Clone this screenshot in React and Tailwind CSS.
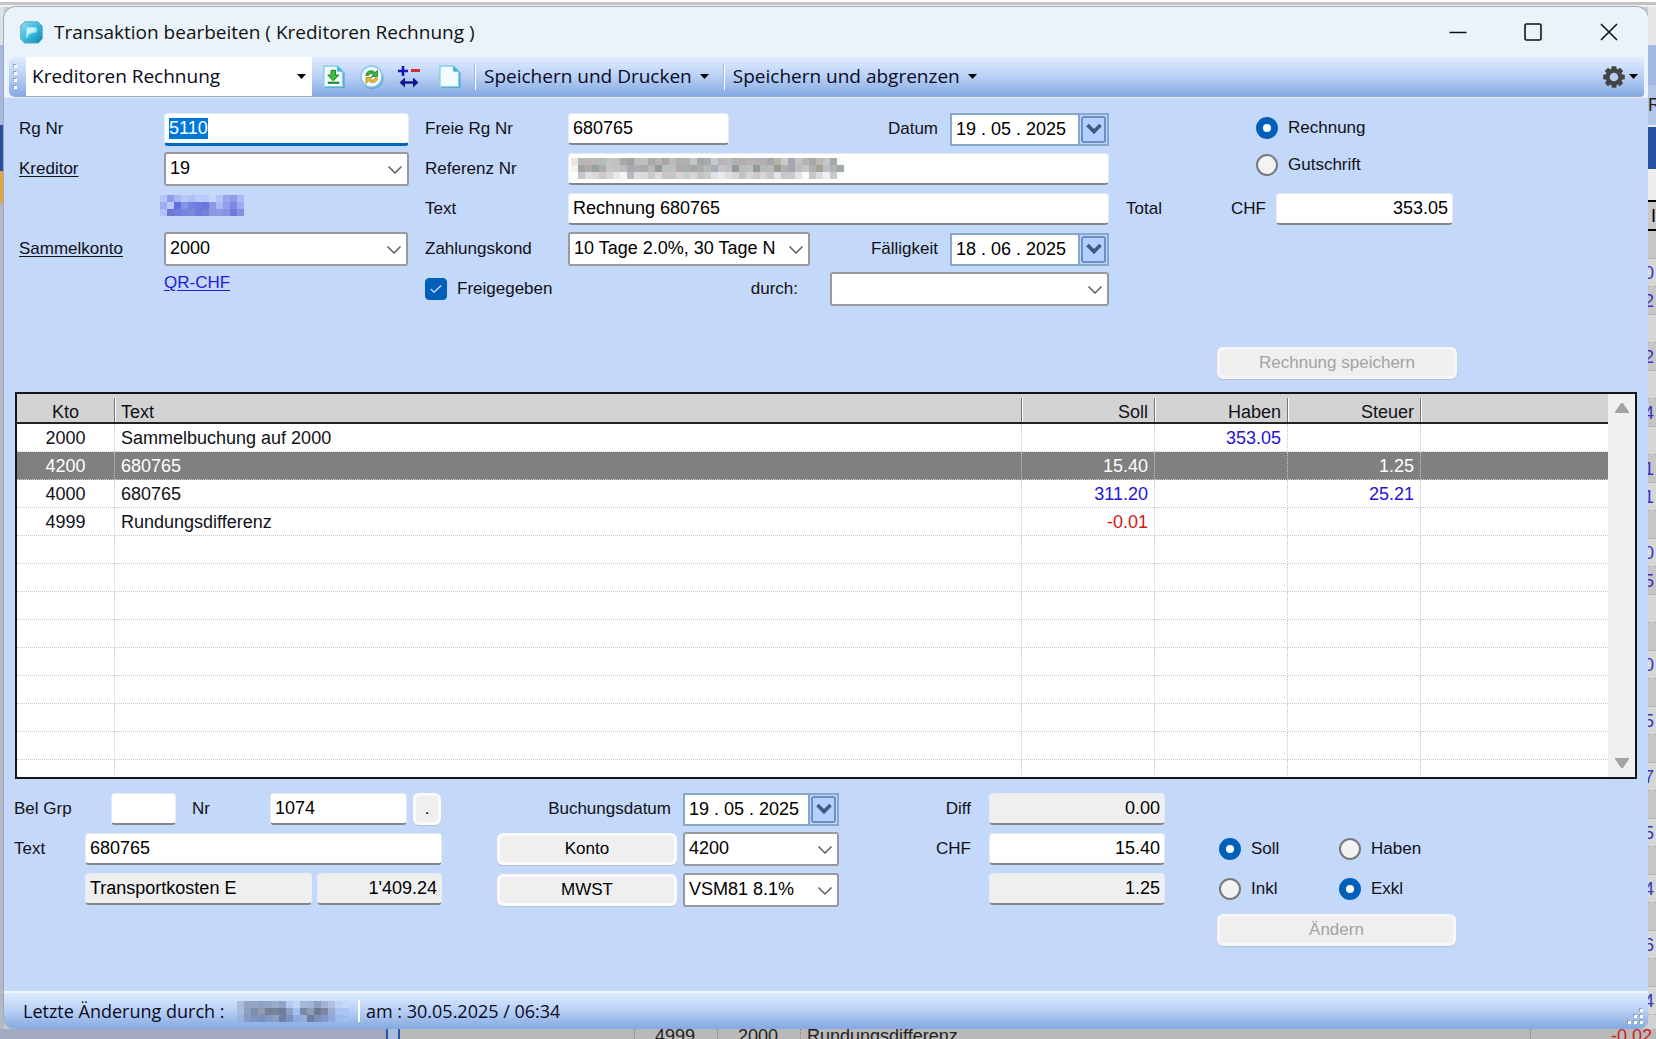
import { useEffect, useId, useRef } from "react";

const FIELD =
  "h-8 min-w-0 rounded-sm border border-[#e6ebf5] border-b-2 border-b-[#868686] px-1 text-lg text-black outline-none";

const REFERENCE_CELLS = [
  "#e8e4e2 #b4b8b8 #c0b2b8 #bcb6bc #b2bcba #c2c4c2 #bfc1bf #a8a8ae #a2a2a4 #bcbcba #bec0be #aaa9ac #b6b2b8 #a5a6a6 #bbb9b9 #b3afb0 #b2b0b2 #c3c7cb #a7a7a7 #a9abab #c6cbd0 #b7b3b9 #bcb9bd #b1b1b3 #b0aeb0 #b4b2b4 #b3afb5 #b0aeb2 #a8a4ac #b9b4a8 #c9cac9 #a7a4ae #bfc1c2 #b6b2b8 #aaa6a8 #bdb5b6 #c0c7c7 #a4a8a8 #fafafa",
  "#f6f2ee #9fa4a2 #abaca4 #98a29f #acb0a8 #c3c5c3 #c0c4c2 #bdbdc0 #a5abae #adb0b0 #abaaae #b7b7b7 #929a96 #bbbfbd #bcc0be #b1a8a8 #a5b0b6 #a6a8a4 #abafad #b5b9b7 #a5b1b1 #c8c0cc #bdbfc1 #929a94 #b9bdbb #bbbfbd #949b95 #b5b7b8 #b9b9bb #9a9a8e #adb0ad #a0a8b4 #bdbdbf #c1c5c3 #adb0ac #a4a294 #bfbdbf #acb4b8 #a0a8a6 #e2e7ea",
  "#fdfdfd #c3c7c7 #dfdde1 #dbd5d9 #c9cbc8 #d9d3d6 #e7e7eb #f4f4f4 #bbb9b9 #dedce0 #dcd6da #c6cac8 #d9dbd8 #c8c2cc #c8c6c9 #dcd2cf #c8ccca #d6d6d8 #c6c2ca #c6cac9 #dbe3ea #ebebeb #dddde0 #d8d4da #c4c4c8 #d2d5d2 #c8c9c7 #d9d3d9 #c8c6ca #e5e3e4 #c9c5cb #c7cbc9 #e5e3e7 #f9fafc #c9c5c9 #dbdbe1 #eef1f4 #c9cbcb #f9fbfc",
];

const CREDITOR_CELLS = [
  "#b3c4f7 #929aec #a5b9f4 #b7c8f8 #acc0f6 #b8cdfa #b8ccfa #c3d6fb #b4c6f8 #9ba8f0 #929aec #a7bcf5",
  "#9faaf0 #bccaf9 #6070de #8793e6 #7780e3 #7079e6 #6878e3 #8c99e8 #abbcf2 #969fee #7f86ec #9bacf0 #8898ee",
  "#b0c2f5 #6a76d8 #727fdc #7785df #7988dc #6c7cdc #7482d8 #8a98e6 #8b98e4 #8794e4 #7379dc #8292e2",
];

const USER_CELLS = [
  "#a9bcd9 #98a4bb #93a6c6 #8fa2c2 #93a5c5 #9cadcb #8ea3cb #b3c9f2 #c3d6fa #a6b8d8 #a2b3d3 #8c9fc4 #a3b4d2 #aebfe2 #bfd3f7 #c3d8fb",
  "#a5bbe0 #8e9fbd #7c8cab #9099ae #748199 #75829b #6f7f9b #8da2c8 #a7c1ef #7989a8 #929cb4 #6c7a94 #7c86a0 #9badcf #a9c3f0 #aac5f2",
  "#9ab2de #859bc6 #7f94bd #7990bd #8198c4 #8aa0cb #6d80a6 #7b92c0 #8faadb #93aedd #6f7da0 #7f90b4 #8199c8 #8da9da #9dbaec #a0bdef",
];

const ROWS = [
  { kto: "2000", text: "Sammelbuchung auf 2000", haben: "353.05" },
  { kto: "4200", text: "680765", soll: "15.40", steuer: "1.25", active: true },
  { kto: "4000", text: "680765", soll: "311.20", steuer: "25.21" },
  { kto: "4999", text: "Rundungsdifferenz", soll: "-0.01" },
  {}, {}, {}, {}, {}, {}, {}, {},
];

function Pixelated({ rows, label }) {
  return (
    <div role="img" aria-label={label} className="flex flex-col">
      {rows.map((row, r) => (
        <div key={r} className="flex">
          {row.split(" ").slice(0, rows[0].split(" ").length).map((color, c) => (
            <span key={c} className="size-[7px]" style={{ backgroundColor: color }} />
          ))}
        </div>
      ))}
    </div>
  );
}

function Combo({ label, value, className }) {
  return (
    <div className={"relative " + className}>
      <select
        aria-label={label}
        defaultValue={value}
        className="block h-[34px] w-full appearance-none rounded-[3px] border-2 border-[#9a9a9e] bg-white pr-6 pb-0.5 pl-1 text-lg text-black outline-none"
      >
        <option>{value}</option>
      </select>
      <svg className="pointer-events-none absolute top-3.5 right-1.5 h-2 w-4" viewBox="0 0 16 8" fill="none" stroke="#606060" strokeWidth="1.5">
        <path d="M1.5 .5 8 7 14.5 .5" />
      </svg>
    </div>
  );
}

function DateField({ label, value, className }) {
  return (
    <div className={"flex h-[33px] border-2 border-[#86a6cb] bg-white " + className}>
      <input aria-label={label} defaultValue={value} className="w-0 flex-1 pl-1 text-lg text-black outline-none" />
      <button type="button" aria-label={label + " wählen"} className="flex w-[29px] items-center justify-center border-l-2 border-[#86a6cb] bg-[#c0d6f8] p-px">
        <span className="flex h-full w-full items-center justify-center rounded-[3px] border-2 border-[#6d8fc4] bg-[#b3d0ff]">
          <svg className="h-3 w-4" viewBox="0 0 16 12" fill="none" stroke="#45597f" strokeWidth="3.6">
            <path d="M1.5 2 8 8.6 14.5 2" />
          </svg>
        </span>
      </button>
    </div>
  );
}

function Radio({ name, label, checked, className = "" }) {
  return (
    <label className={"flex items-center gap-2.5 text-[17px] " + className}>
      <input
        type="radio"
        name={name}
        defaultChecked={checked}
        className="size-[22px] shrink-0 appearance-none rounded-full border-2 border-[#77797d] bg-[#f3f3f3] checked:border-[7px] checked:border-[#005fb8] checked:bg-white"
      />
      {label}
    </label>
  );
}

function PushButton({ children, className = "", disabled }) {
  return (
    <button
      type="button"
      disabled={disabled}
      className={"h-8 rounded-md border-[3px] border-[#fbfbfb] bg-[#efefef] text-[17px] leading-6 text-black shadow-[0_1px_1px_#b9c2d4] disabled:border-[#f6f6f6] disabled:text-[#a3a3a3] " + className}
    >
      {children}
    </button>
  );
}

function Caret() {
  return (
    <svg className="h-[5px] w-[9px]" viewBox="0 0 9 5">
      <path d="M0 0h9L4.5 5z" fill="#000" />
    </svg>
  );
}

function Separator() {
  return <span className="h-[26px] w-0.5 border-l border-[#9db8e4] bg-white" />;
}

function AppIcon() {
  return (
    <svg className="size-[23px]" viewBox="0 0 23 23">
      <defs>
        <linearGradient id="tile" x1="0" y1="0" x2="1" y2="1">
          <stop offset="0" stopColor="#8fe0ee" />
          <stop offset=".5" stopColor="#3fb9da" />
          <stop offset="1" stopColor="#0a84ae" />
        </linearGradient>
      </defs>
      <path d="M5 .8h13l4.2 4.5v12.5L18.500 22H4.500L.8 18V4.500z" fill="url(#tile)" stroke="#4aa9c4" strokeLinejoin="round" />
      <path d="M6 6h9c3 0 3 5 0 6l-5 1-3 4H6z" fill="#8ee3f4" />
      <path d="M7 7h7c1.500 0 1.500 3 0 3.500L8.500 12 7 14z" fill="#c9f6fb" />
    </svg>
  );
}

function SheetBase() {
  return (
    <>
      <path d="M3 2.500h14l6 6V24H3z" fill="#4f9fc8" />
      <path d="M1.500 1h14l5.500 5.500V22.500h-19.500z" fill="#f3fcff" stroke="#86cfe6" strokeWidth="1.500" />
      <path d="M15.500 1v5.500H21z" fill="#38b6dc" stroke="#5cc0de" />
    </>
  );
}

function ImportIcon() {
  return (
    <svg className="size-6" viewBox="0 0 24 25">
      <SheetBase />
      <path d="M9 5.500h4.500v5H17L11.200 16.500 5.500 10.500H9z" fill="#3fc23a" stroke="#17801c" />
      <path d="M5.500 18.500h12" stroke="#17801c" strokeWidth="2.200" />
    </svg>
  );
}

function RefreshIcon() {
  return (
    <svg className="size-6" viewBox="0 0 24 24">
      <circle cx="12.500" cy="13" r="11" fill="#5fa3cd" />
      <circle cx="11.500" cy="11.500" r="10.500" fill="#eefaff" stroke="#86c9e4" strokeWidth="1.500" />
      <path d="M6 10.500C6 6 12 4 15 7.500L17.500 5.500v6h-6l2-2C11.500 8 9 8.500 8.500 10.500z" fill="#3fae3c" stroke="#1d7d28" strokeWidth=".8" />
      <path d="M17.500 13c0 4.500-6 6-9 2.800L6 18.500v-6h6L10 14.500c1.800 1.300 4.500.8 5-1.500z" fill="#f2bd24" stroke="#a8862a" strokeWidth=".8" />
    </svg>
  );
}

function AdjustIcon() {
  return (
    <svg className="h-[22px] w-[22px]" viewBox="0 0 22 22" fill="none">
      <path d="M0 5h10M5 0v10" stroke="#1b12c4" strokeWidth="2.600" />
      <path d="M13 4.500h9" stroke="#d03030" strokeWidth="3" />
      <path d="M4 16.500h14" stroke="#16168c" strokeWidth="2.600" />
      <path d="M7 11.500v10l-5.500-5zM15 11.500v10l5.500-5z" fill="#16168c" />
    </svg>
  );
}

function NewIcon() {
  return (
    <svg className="size-6" viewBox="0 0 24 25">
      <SheetBase />
    </svg>
  );
}

function GearIcon() {
  return (
    <svg className="size-[22px]" viewBox="-11 -11 22 22">
      {[0, 45, 90, 135].map((a) => (
        <rect key={a} x="-2.500" y="-10.800" width="5" height="21.600" rx="1" fill="#444" transform={"rotate(" + a + ")"} />
      ))}
      <circle r="8.500" fill="#444" />
      <circle r="4.300" fill="#b5cbf1" />
    </svg>
  );
}

function TitleBar() {
  return (
    <header className="flex h-[50px] shrink-0 items-center bg-[#ebf3fa] pl-4 font-['Open_Sans',sans-serif] text-[19px] text-[#111]">
      <AppIcon />
      <h1 className="flex-1 pl-[11px]">Transaktion bearbeiten ( Kreditoren Rechnung )</h1>
      <button type="button" aria-label="Minimieren" className="flex h-full w-[75px] items-center justify-center">
        <svg className="size-[18px]" viewBox="0 0 18 18"><path d="M.5 9.500h17" stroke="#111" strokeWidth="1.500" /></svg>
      </button>
      <button type="button" aria-label="Maximieren" className="flex h-full w-[75px] items-center justify-center">
        <svg className="size-[18px]" viewBox="0 0 18 18"><rect x="1" y="1" width="16" height="16" rx="1.500" fill="none" stroke="#111" strokeWidth="1.600" /></svg>
      </button>
      <button type="button" aria-label="Schliessen" className="flex h-full w-[78px] items-center justify-center">
        <svg className="size-[18px]" viewBox="0 0 18 18"><path d="M1 1 17 17M17 1 1 17" stroke="#111" strokeWidth="1.600" /></svg>
      </button>
    </header>
  );
}

function Toolbar() {
  return (
    <div className="bg-[#ebf3fa]">
      <div className="mr-1 ml-[5px] flex h-10 items-center rounded-l-md rounded-r-sm border-b border-[#a3a9bf] bg-linear-to-b from-[#e0edfe] via-[#b9d0f5] to-[#85aae3] font-['Open_Sans',sans-serif] text-[19px] text-[#0a0a1e]">
        <span className="mx-[5px] flex flex-col gap-1">
          {[0, 1, 2, 3].map((i) => (
            <span key={i} className="size-[3px] bg-white shadow-[-1px_-1px_0_#8f9fc0]" />
          ))}
        </span>
        <div className="relative ml-1 h-[39px] w-[286px] bg-white">
          <select aria-label="Vorlage" defaultValue="Kreditoren Rechnung" className="h-full w-full appearance-none bg-white pl-1.5 outline-none">
            <option>Kreditoren Rechnung</option>
          </select>
          <span className="pointer-events-none absolute top-[17px] right-1.5 flex"><Caret /></span>
        </div>
        <button type="button" aria-label="Importieren" className="ml-2.5"><ImportIcon /></button>
        <button type="button" aria-label="Aktualisieren" className="ml-3.5"><RefreshIcon /></button>
        <button type="button" aria-label="Anpassen" className="ml-3.5"><AdjustIcon /></button>
        <button type="button" aria-label="Neu" className="mr-3 ml-[18px]"><NewIcon /></button>
        <Separator />
        <button type="button" className="flex items-center gap-2 pr-3.5 pl-2">Speichern und Drucken <Caret /></button>
        <Separator />
        <button type="button" className="flex items-center gap-2 pl-2">Speichern und abgrenzen <Caret /></button>
        <button type="button" aria-label="Einstellungen" className="mr-1.5 ml-auto flex items-center gap-1"><GearIcon /> <Caret /></button>
      </div>
    </div>
  );
}

function InvoiceForm() {
  const id = useId();
  const first = useRef(null);
  useEffect(() => {
    first.current.focus();
    first.current.select();
  }, []);
  return (
    <form className="flex px-[15px] pt-[11px] text-[17px]">
      <div className="grid grid-cols-[145px_245px] auto-rows-[40px] items-center">
        <label htmlFor={id + "rg"}>Rg Nr</label>
        <input
          ref={first}
          id={id + "rg"}
          defaultValue="5110"
          className="h-[33px] rounded-sm border border-[#e6ebf5] border-b-[3px] border-b-[#0067c0] bg-white px-1 text-lg leading-normal outline-none selection:bg-[#0078d7] selection:text-white"
        />
        <a href="#kreditor" className="underline underline-offset-2">Kreditor</a>
        <Combo label="Kreditor" value="19" className="w-[245px]" />
        <span />
        <div className="-ml-1 pb-2"><Pixelated rows={CREDITOR_CELLS} label="Kreditor unkenntlich" /></div>
        <a href="#sammelkonto" className="underline underline-offset-2">Sammelkonto</a>
        <Combo label="Sammelkonto" value="2000" className="w-[244px]" />
        <span />
        <a href="#qr" className="pb-3 text-[#2020d8] underline underline-offset-2">QR-CHF</a>
      </div>
      <div className="ml-4 grid grid-cols-[143px_541px] auto-rows-[40px] items-center">
        <label htmlFor={id + "frei"}>Freie Rg Nr</label>
        <div className="flex items-center">
          <input id={id + "frei"} defaultValue="680765" className={FIELD + " w-[161px] bg-white"} />
          <span className="ml-auto pr-3">Datum</span>
          <DateField label="Datum" value="19 . 05 . 2025" className="w-[159px]" />
        </div>
        <span>Referenz Nr</span>
        <div className="flex h-8 items-center rounded-sm border border-[#e6ebf5] border-b-2 border-b-[#868686] bg-white px-0.5">
          <Pixelated rows={REFERENCE_CELLS} label="Referenznummer unkenntlich" />
        </div>
        <label htmlFor={id + "text"}>Text</label>
        <input id={id + "text"} defaultValue="Rechnung 680765" className={FIELD + " bg-white"} />
        <span>Zahlungskond</span>
        <div className="flex items-center">
          <Combo label="Zahlungskond" value="10 Tage 2.0%, 30 Tage N" className="w-[242px]" />
          <span className="ml-auto pr-3">Fälligkeit</span>
          <DateField label="Fälligkeit" value="18 . 06 . 2025" className="w-[159px]" />
        </div>
        <label className="flex items-center gap-2.5">
          <span className="relative flex">
            <input type="checkbox" defaultChecked className="size-[22px] appearance-none rounded-[4px] border border-[#77797d] bg-white checked:border-[#005fb8] checked:bg-[#005fb8]" />
            <svg className="pointer-events-none absolute top-[7px] left-[5px] h-2 w-3" viewBox="0 0 12 8" fill="none" stroke="#cfe3f7" strokeWidth="1.300"><path d="M.8 4 4 7.200 11.200 .6" /></svg>
          </span>
          Freigegeben
        </label>
        <div className="flex items-center justify-end">
          <span className="pr-8">durch:</span>
          <Combo label="durch" value="" className="w-[279px]" />
        </div>
      </div>
      <div className="ml-[17px] flex w-[331px] flex-col pb-[13px]">
        <div className="flex h-20 flex-col pl-[130px]">
          <Radio name="art" label="Rechnung" checked className="h-[37px]" />
          <Radio name="art" label="Gutschrift" className="h-[37px]" />
        </div>
        <div className="flex h-10 items-center">
          <span>Total</span>
          <label htmlFor={id + "total"} className="ml-auto pr-2.5">CHF</label>
          <input id={id + "total"} defaultValue="353.05" className={FIELD + " mr-1 w-[177px] bg-white text-right"} />
        </div>
        <PushButton disabled className="mt-[118px] w-60 self-end">Rechnung speichern</PushButton>
      </div>
    </form>
  );
}

function HeadCell({ children, className = "" }) {
  return (
    <th scope="col" className={"border-b-2 border-[#222] p-0 font-normal " + className}>
      <span className="mt-1 block h-6 border-r border-[#777] px-1.5 leading-7 shadow-[1px_0_0_#fff]">{children}</span>
    </th>
  );
}

function Amount({ value, active }) {
  const tone = active ? " text-white" : value && value.startsWith("-") ? " text-[#d01818]" : " text-[#2412d8]";
  return <td className={"border-r border-b border-dotted border-[#c8c8c8] px-1.5 py-0 text-right" + tone}>{value}</td>;
}

function Ledger() {
  const cell = "border-r border-b border-dotted border-[#c8c8c8] px-1.5 py-0";
  return (
    <div className="mr-[11px] ml-[11px] flex h-[387px] overflow-hidden border-2 border-[#15151c] bg-white">
      <div className="min-w-0 flex-1">
        <table className="w-full table-fixed border-separate border-spacing-0 text-lg leading-6">
          <colgroup>
            <col className="w-[98px]" />
            <col />
            <col className="w-[133px]" />
            <col className="w-[133px]" />
            <col className="w-[133px]" />
            <col className="w-[187px]" />
          </colgroup>
          <thead>
            <tr className="h-[30px] bg-[#d3d3d3] align-top">
              <HeadCell className="text-center">Kto</HeadCell>
              <HeadCell className="text-left">Text</HeadCell>
              <HeadCell className="text-right">Soll</HeadCell>
              <HeadCell className="text-right">Haben</HeadCell>
              <HeadCell className="text-right">Steuer</HeadCell>
              <td className="border-b-2 border-[#222] p-0" />
            </tr>
          </thead>
          <tbody>
            {ROWS.map((row, i) => (
              <tr key={i} className={row.active ? "h-7 bg-[#808080] text-white" : "h-7"}>
                <td className={cell + " text-center"}>{row.kto}</td>
                <td className={cell}>{row.text}</td>
                <Amount value={row.soll} active={row.active} />
                <Amount value={row.haben} active={row.active} />
                <Amount value={row.steuer} active={row.active} />
                <td className="border-b border-dotted border-[#c8c8c8] p-0" />
              </tr>
            ))}
            <tr className="h-[22px]">
              {[0, 1, 2, 3, 4].map((i) => (
                <td key={i} className="border-r border-dotted border-[#c8c8c8] p-0" />
              ))}
              <td className="p-0" />
            </tr>
          </tbody>
        </table>
      </div>
      <div className="flex w-[27px] flex-col items-center justify-between bg-[#f0f0f0] py-[9px]">
        <svg className="h-2.5 w-3.5" viewBox="0 0 14 10"><path d="M6 0h2l6 9v1H0V9z" fill="#a3a3a3" /></svg>
        <svg className="h-2.5 w-3.5" viewBox="0 0 14 10"><path d="M0 0h14v1L8 10H6L0 1z" fill="#a3a3a3" /></svg>
      </div>
    </div>
  );
}

function EntryForm() {
  const id = useId();
  return (
    <form className="flex px-2.5 pt-2.5 text-[17px]">
      <div className="w-[428px]">
        <div className="flex h-10 items-center">
          <label htmlFor={id + "grp"} className="w-[97px]">Bel Grp</label>
          <input id={id + "grp"} className={FIELD + " w-[65px] bg-white"} />
          <label htmlFor={id + "nr"} className="ml-4 w-[78px]">Nr</label>
          <input id={id + "nr"} defaultValue="1074" className={FIELD + " w-[137px] bg-white"} />
          <PushButton className="ml-1.5 w-7">.</PushButton>
        </div>
        <div className="flex h-10 items-center">
          <label htmlFor={id + "text"} className="w-[71px]">Text</label>
          <input id={id + "text"} defaultValue="680765" className={FIELD + " flex-1 bg-white"} />
        </div>
        <div className="flex h-10 items-center gap-[5px] pl-[71px]">
          <input aria-label="Kontobezeichnung" readOnly defaultValue="Transportkosten E" className={FIELD + " flex-1 bg-[#efefef]"} />
          <input aria-label="Saldo" readOnly defaultValue="1'409.24" className={FIELD + " w-[125px] bg-[#efefef] text-right"} />
        </div>
      </div>
      <div className="ml-[55px] w-[342px]">
        <div className="flex h-10 items-center justify-end">
          <span className="pr-3">Buchungsdatum</span>
          <DateField label="Buchungsdatum" value="19 . 05 . 2025" className="w-[156px]" />
        </div>
        <div className="flex h-10 items-center justify-between">
          <PushButton className="w-[180px]">Konto</PushButton>
          <Combo label="Konto" value="4200" className="w-[156px]" />
        </div>
        <div className="flex h-[41px] items-center justify-between">
          <PushButton className="w-[180px]">MWST</PushButton>
          <Combo label="MWST" value="VSM81 8.1%" className="w-[156px]" />
        </div>
      </div>
      <div className="ml-[90px] w-[236px]">
        <div className="flex h-10 items-center justify-end">
          <label htmlFor={id + "diff"} className="pr-[18px]">Diff</label>
          <input id={id + "diff"} readOnly defaultValue="0.00" className={FIELD + " w-[176px] bg-[#efefef] text-right"} />
        </div>
        <div className="flex h-10 items-center justify-end">
          <label htmlFor={id + "chf"} className="pr-[18px]">CHF</label>
          <input id={id + "chf"} defaultValue="15.40" className={FIELD + " w-[176px] bg-white text-right"} />
        </div>
        <div className="flex h-10 items-center justify-end">
          <input aria-label="Steuerbetrag" readOnly defaultValue="1.25" className={FIELD + " w-[176px] bg-[#efefef] text-right"} />
        </div>
      </div>
      <div className="ml-[52px] flex w-[239px] flex-col pt-10">
        <div className="grid grid-cols-[120px_1fr] auto-rows-[40px] pl-0.5">
          <Radio name="seite" label="Soll" checked />
          <Radio name="seite" label="Haben" />
          <Radio name="steuer" label="Inkl" />
          <Radio name="steuer" label="Exkl" checked />
        </div>
        <PushButton disabled className="mt-[5px]">Ändern</PushButton>
      </div>
    </form>
  );
}

function StatusBar() {
  return (
    <footer className="mt-auto flex h-[38px] items-center border-t-2 border-[#f0f6ff] bg-linear-to-b from-[#dceafe] via-[#b7cff4] to-[#83a8e1] pl-[19px] font-['Open_Sans',sans-serif] text-lg text-[#0a0a1e]">
      <span className="w-[214px]">Letzte Änderung durch :</span>
      <Pixelated rows={USER_CELLS} label="Benutzer unkenntlich" />
      <span className="mr-1.5 ml-[9px] h-[22px] w-0.5 bg-white" />
      <span>am : 30.05.2025 / 06:34</span>
      <svg className="mr-1 mb-1 ml-auto size-[18px] self-end" viewBox="0 0 18 18">
        {[[13, 1], [13, 7], [7, 7], [13, 13], [7, 13], [1, 13]].map(([x, y]) => (
          <g key={x + "-" + y}>
            <rect x={x} y={y} width="3" height="3" fill="#8c9ab8" />
            <rect x={x + 1} y={y + 1} width="3" height="3" fill="#fff" />
          </g>
        ))}
      </svg>
    </footer>
  );
}

const EDGE = [
  "", "0", "2", "", "2", "", "4", "", "1", "1", "", "0", "5", "", "", "0", "", "5", "", "7", "", "5", "", "4", "", "6", "", "4",
];

function RightEdge() {
  return (
    <div aria-hidden="true" className="flex w-2 shrink-0 flex-col overflow-hidden bg-[#d0d0d0] text-lg">
      <span className="h-[38px] bg-[#e6e6e6]" />
      <span className="h-10 bg-[#a3b9e4]" />
      <span className="flex h-10 items-center bg-[#b3c6e6] text-[#222]">R</span>
      <span className="h-11 border-t-2 border-[#e4ecf8] bg-[#2a52a4]" />
      <span className="h-[31px] bg-[#ededed]" />
      <span className="flex h-[31px] items-center justify-end border-y-2 border-black bg-[#c8c8c8] text-black">I</span>
      {EDGE.map((d, i) => (
        <span key={i} className="flex h-7 shrink-0 items-center justify-end border-b border-dotted border-[#aaa] text-[#3434c8] odd:bg-[#c6c6c6] even:bg-[#d6d6d6]">
          <span className="pr-0.5">{d}</span>
        </span>
      ))}
    </div>
  );
}

function BottomEdge() {
  return (
    <div aria-hidden="true" className="flex h-2.5 shrink-0 overflow-hidden bg-[#b9b9b9] text-lg leading-[14px] text-[#222]">
      <span className="w-[388px] border-r-2 border-[#2a52a4] bg-[#a3aac0]" />
      <span className="w-3 border-r-2 border-[#2a52a4] bg-[#a9bbdc]" />
      <span className="w-[235px] border-r border-dotted border-[#888]" />
      <span className="w-[83px] border-r border-dotted border-[#888] pl-5">4999</span>
      <span className="w-[83px] border-r border-dotted border-[#888] pl-5">2000</span>
      <span className="flex-1 pl-1.5">Rundungsdifferenz</span>
      <span className="border-l border-dotted border-[#888] pr-1 pl-20 text-[#d02020]">-0.02</span>
    </div>
  );
}

export default function App() {
  return (
    <div className="flex min-h-screen flex-col bg-[#c9ccd4] font-['Liberation_Sans',Arial,sans-serif] text-[#111118]">
      <div className="h-[7px] border-t-2 border-b-2 border-t-white border-b-[#f0f0f0] bg-[#c4c4c4]" />
      <div className="flex flex-1">
        <div className="flex w-1 shrink-0 flex-col bg-[#b4b9c8]">
          <span className="h-[38px] bg-[#d9e4ea]" />
          <span className="h-20 bg-[#a3b9e4]" />
          <span className="h-[46px] bg-[#28509f]" />
          <span className="h-8 bg-[#e0a73c]" />
        </div>
        <main className="flex min-w-0 flex-1 flex-col overflow-hidden rounded-xl bg-[#c4d8f9] shadow-[0_0_0_1px_#a3a8b4]">
          <TitleBar />
          <Toolbar />
          <div className="h-px bg-[#dfeafc]" />
          <InvoiceForm />
          <Ledger />
          <EntryForm />
          <StatusBar />
        </main>
        <RightEdge />
      </div>
      <BottomEdge />
    </div>
  );
}
